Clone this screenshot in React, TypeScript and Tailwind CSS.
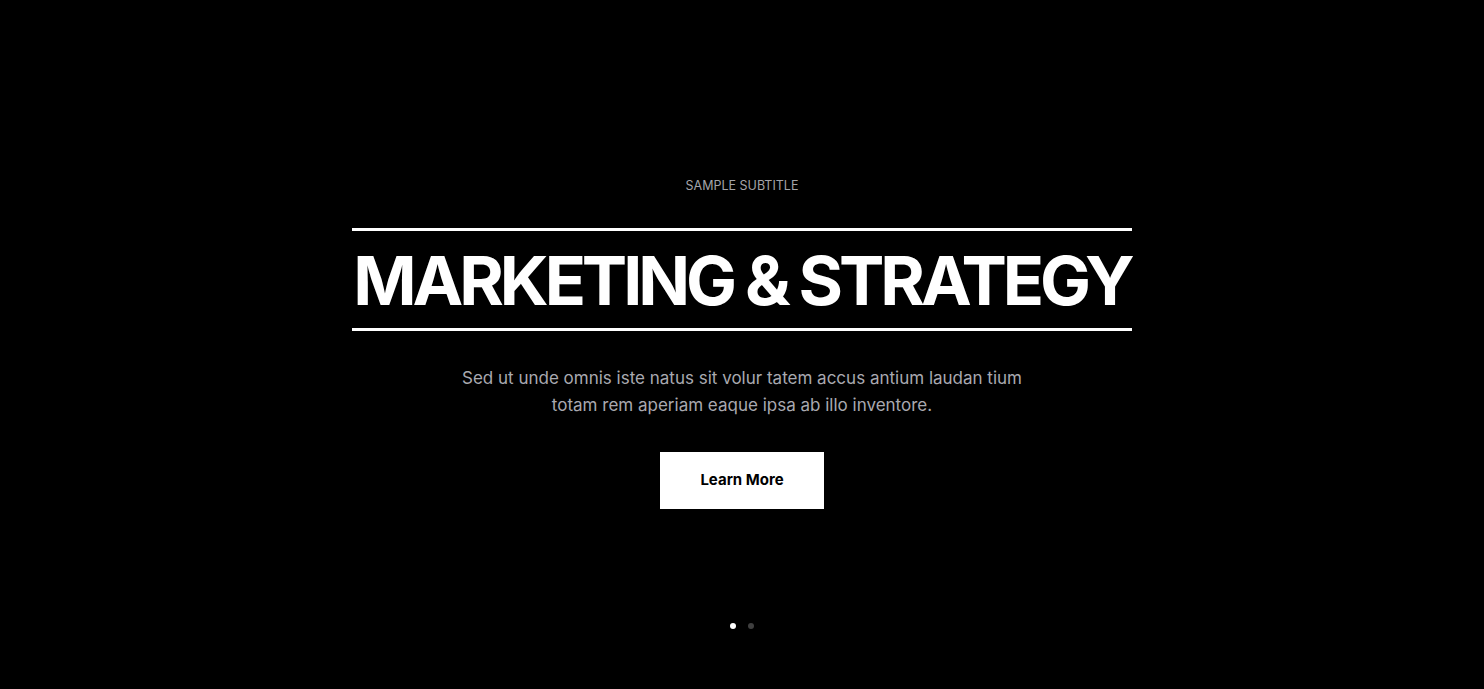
import React from "react";

const slides = [0, 1];

const App: React.FC = () => {
  return (
    <div className="min-h-screen h-[689px] bg-black flex flex-col items-center pt-[177px] font-['Inter',sans-serif]">
      <p className="text-[12.5px] leading-[18px] text-[#a3a3a8] uppercase">Sample Subtitle</p>

      <div className="mt-[33px] w-[780px] border-y-[3px] border-white flex justify-center">
        <h1 className="pt-[2px] text-center text-white font-bold text-[68px] leading-[95px] tracking-[-0.06em] whitespace-nowrap">
          MARKETING &amp; STRATEGY
        </h1>
      </div>

      <p className="mt-[34px] w-[600px] text-center text-[17px] leading-[27px] text-[#a9a9b0]">
        Sed ut unde omnis iste natus sit volur tatem accus antium laudan tium
        <br />
        totam rem aperiam eaque ipsa ab illo inventore.
      </p>

      <button className="mt-[33px] w-[164px] h-[57px] bg-white text-black text-[15px] font-bold">
        Learn More
      </button>

      <div className="mt-[114px] flex gap-[12px]">
        {slides.map((s) => (
          <span
            key={s}
            className={s === 0 ? "w-[6px] h-[6px] rounded-full bg-white" : "w-[6px] h-[6px] rounded-full bg-[#3f3f3f]"}
          />
        ))}
      </div>
    </div>
  );
};

export default App;
